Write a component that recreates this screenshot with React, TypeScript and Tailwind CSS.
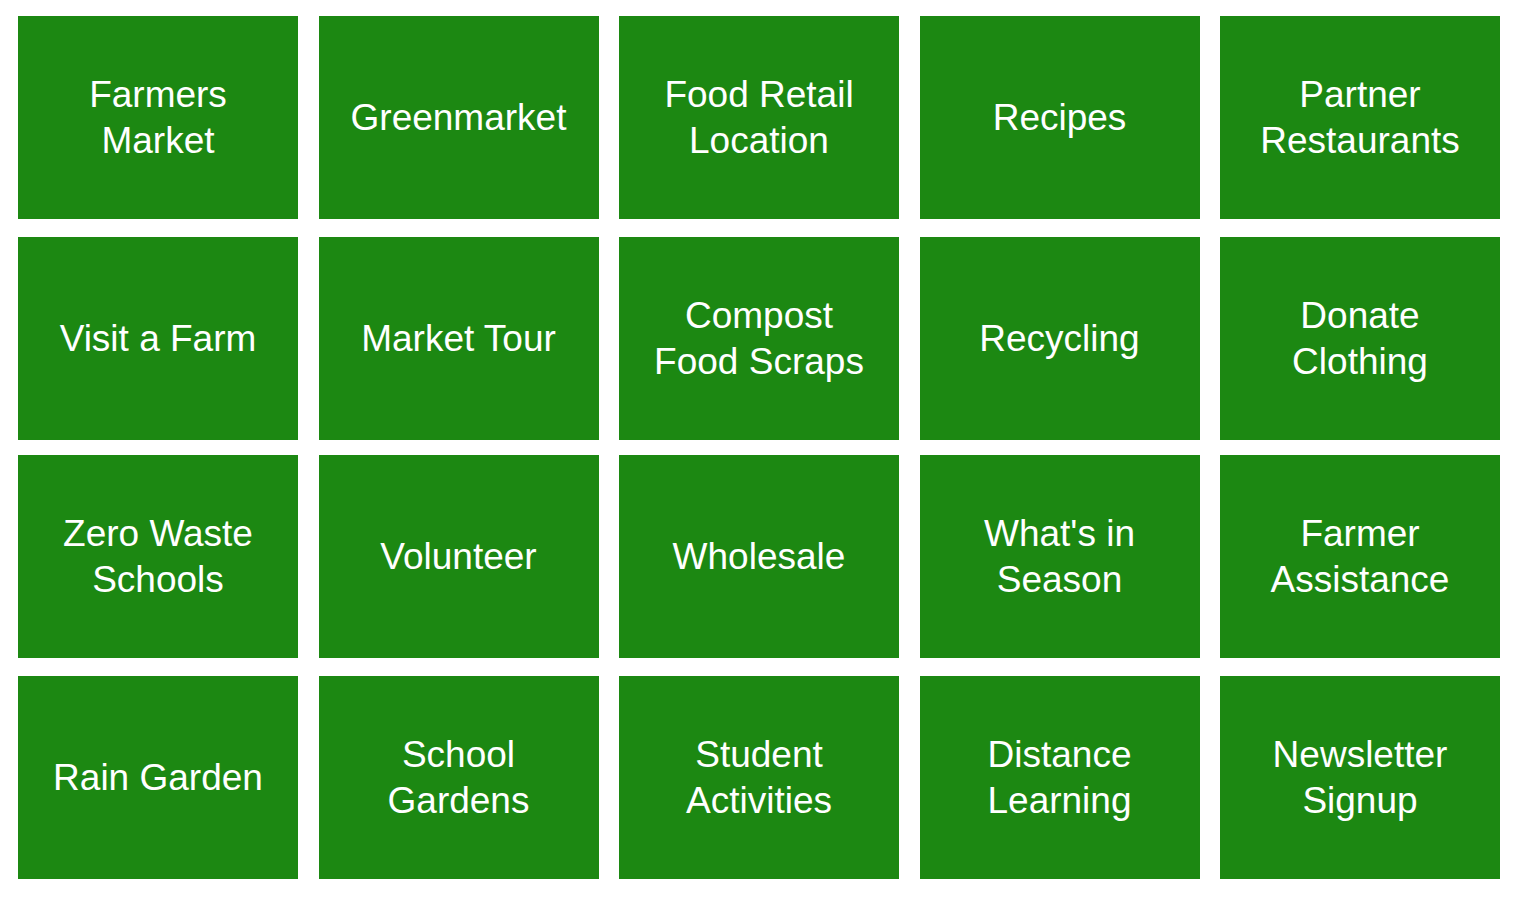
const rows = [
  { gap: "mt-4", items: ["Farmers Market", "Greenmarket", "Food Retail Location", "Recipes", "Partner Restaurants"] },
  { gap: "mt-[18px]", items: ["Visit a Farm", "Market Tour", "Compost Food Scraps", "Recycling", "Donate Clothing"] },
  { gap: "mt-[15px]", items: ["Zero Waste Schools", "Volunteer", "Wholesale", "What's in Season", "Farmer Assistance"] },
  { gap: "mt-[18px]", items: ["Rain Garden", "School Gardens", "Student Activities", "Distance Learning", "Newsletter Signup"] },
];

const Tile = ({ label }: { label: string }) => (
  <a
    href="#"
    className="flex h-[203px] items-center justify-center bg-[#1c8812] px-6 text-center text-[37px] leading-[46px] text-white"
  >
    {label}
  </a>
);

export default function App() {
  return (
    <div className="min-h-[898px] bg-white px-[18px] pb-[19px] font-['Liberation_Sans',Arial,sans-serif]">
      {rows.map((row, i) => (
        <div key={i} className={`grid grid-cols-5 gap-x-[20.5px] ${row.gap}`}>
          {row.items.map((label) => (
            <Tile key={label} label={label} />
          ))}
        </div>
      ))}
    </div>
  );
}
